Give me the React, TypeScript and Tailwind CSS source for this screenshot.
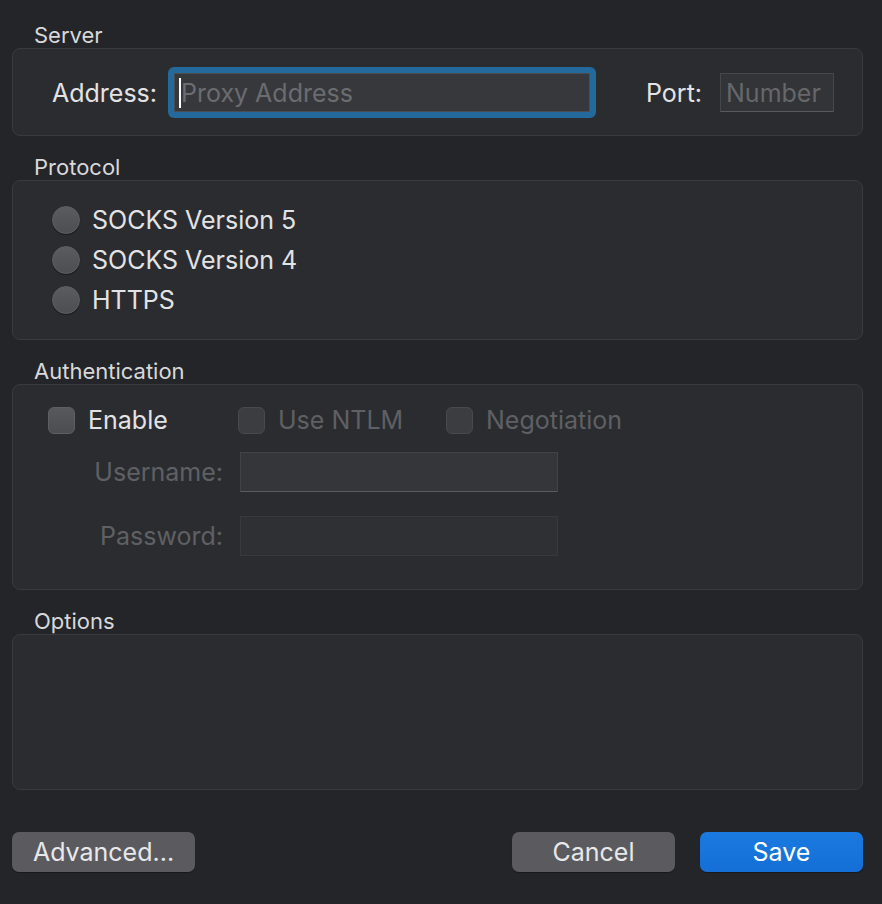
import React from 'react';

const font = { fontFamily: 'Inter, "Noto Sans", sans-serif' };

function SectionLabel({ children, className = '' }: { children: React.ReactNode; className?: string }) {
  return (
    <div className={`h-[26px] pl-[22px] text-[22px] leading-[26px] text-[#d8d8da] ${className}`}>{children}</div>
  );
}

function Radio({ label }: { label: string }) {
  return (
    <div className="flex h-[40px] items-center">
      <span className="h-[28px] w-[28px] rounded-full border border-[#5e5f63] bg-gradient-to-b from-[#5b5c60] to-[#4d4e52] shadow-[0_1px_1px_rgba(0,0,0,0.4)]" />
      <span className="ml-[12px] pt-[2px] text-[25px] text-[#e3e3e5]">{label}</span>
    </div>
  );
}

function Check({ label, disabled = false }: { label: string; disabled?: boolean }) {
  return (
    <div className="flex items-center">
      <span
        className={`h-[27px] w-[27px] rounded-[6px] border ${
          disabled ? 'border-[#48494d] bg-[#3c3d41]' : 'border-[#5e5f63] bg-gradient-to-b from-[#58595d] to-[#4c4d51]'
        }`}
      />
      <span className={`ml-[13px] pt-[2px] text-[25px] ${disabled ? 'text-[#5f6064]' : 'text-[#e3e3e5]'}`}>{label}</span>
    </div>
  );
}

export default function App() {
  return (
    <div className="h-[904px] w-[882px] bg-[#242529] px-[12px] pt-[22px] select-none" style={font}>
      <SectionLabel>Server</SectionLabel>
      <div className="flex h-[88px] w-[851px] items-center rounded-[8px] border border-[#3a3b3f] bg-[#2b2c30]">
        <div className="w-[144px] pt-[3px] text-right text-[25px] text-[#e3e3e5]">Address:</div>
        <div className="ml-[11px] flex h-[51px] w-[428px] items-center rounded-[6px] bg-[#23699b] p-[6px]">
          <div className="relative flex h-[39px] w-full items-center border border-[#4c4d51] bg-[#37383c] pl-[6px]">
            <span className="absolute left-[4px] top-[4px] h-[30px] w-[2px] bg-white" />
            <span className="pt-[3px] text-[25px] text-[#6b6c70]">Proxy Address</span>
          </div>
        </div>
        <div className="ml-[50px] pt-[3px] text-[25px] text-[#e3e3e5]">Port:</div>
        <div className="ml-[18px] flex h-[39px] w-[114px] items-center border border-[#46474b] border-b-[#58595d] bg-[#333438] pl-[5px]">
          <span className="pt-[3px] text-[25px] text-[#66676b]">Number</span>
        </div>
      </div>

      <SectionLabel className="mt-[18px]">Protocol</SectionLabel>
      <div className="h-[160px] w-[851px] rounded-[8px] border border-[#3a3b3f] bg-[#2b2c30] pl-[39px] pt-[19px]">
        <Radio label="SOCKS Version 5" />
        <Radio label="SOCKS Version 4" />
        <Radio label="HTTPS" />
      </div>

      <SectionLabel className="mt-[18px]">Authentication</SectionLabel>
      <div className="h-[206px] w-[851px] rounded-[8px] border border-[#3a3b3f] bg-[#2b2c30] pt-[21px]">
        <div className="flex h-[28px] items-center pl-[35px]">
          <div className="w-[190px]">
            <Check label="Enable" />
          </div>
          <div className="w-[208px]">
            <Check label="Use NTLM" disabled />
          </div>
          <Check label="Negotiation" disabled />
        </div>
        <div className="mt-[18px] flex items-center">
          <div className="w-[210px] pt-[2px] text-right text-[25px] text-[#5f6064]">Username:</div>
          <div className="ml-[17px] h-[40px] w-[318px] border border-[#424347] border-b-[#5a5b5f] bg-[#35363a]" />
        </div>
        <div className="mt-[24px] flex items-center">
          <div className="w-[210px] pt-[2px] text-right text-[25px] text-[#5f6064]">Password:</div>
          <div className="ml-[17px] h-[40px] w-[318px] border border-[#38393d] bg-[#2f3034]" />
        </div>
      </div>

      <SectionLabel className="mt-[18px]">Options</SectionLabel>
      <div className="h-[156px] w-[851px] rounded-[8px] border border-[#3a3b3f] bg-[#2b2c30]" />

      <div className="mt-[42px] flex w-[851px] items-center">
        <button className="h-[40px] w-[183px] rounded-[7px] bg-[#5b5b5f] pt-[1px] text-[25px] text-[#e8e8ea] shadow-[0_1px_1px_rgba(0,0,0,0.35)]">
          Advanced...
        </button>
        <div className="flex-1" />
        <button className="h-[40px] w-[163px] rounded-[7px] bg-[#5b5b5f] pt-[1px] text-[25px] text-[#e8e8ea] shadow-[0_1px_1px_rgba(0,0,0,0.35)]">
          Cancel
        </button>
        <button className="ml-[25px] h-[40px] w-[163px] rounded-[7px] bg-gradient-to-b from-[#1a7ae0] to-[#146fd6] pt-[1px] text-[25px] text-white shadow-[0_1px_1px_rgba(0,0,0,0.35)]">
          Save
        </button>
      </div>
    </div>
  );
}
